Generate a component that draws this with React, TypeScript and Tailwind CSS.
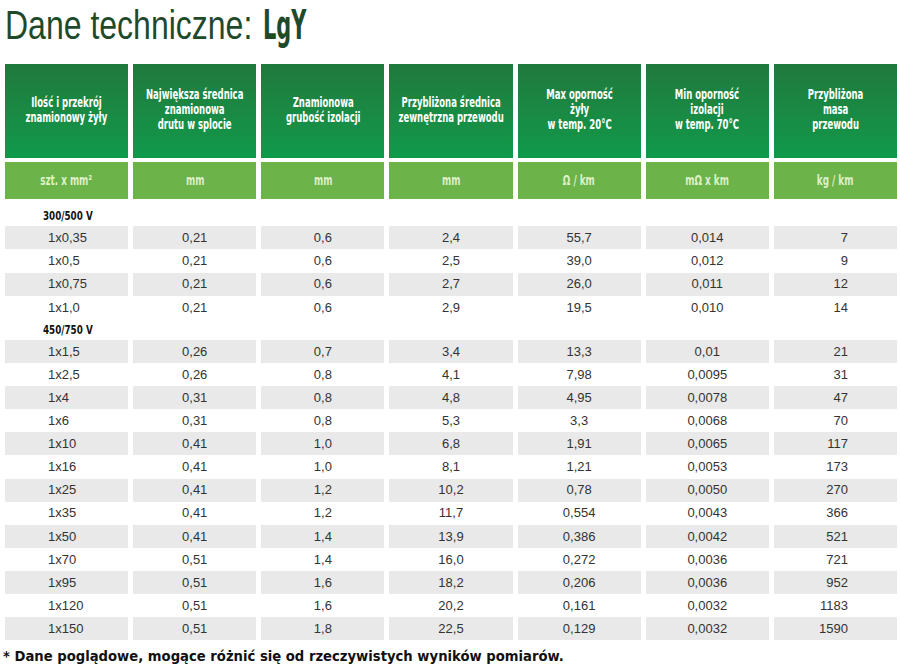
import React from "react";

const headers = [
  ["Ilość i przekrój", "znamionowy żyły"],
  ["Największa średnica", "znamionowa", "drutu w splocie"],
  ["Znamionowa", "grubość izolacji"],
  ["Przybliżona średnica", "zewnętrzna przewodu"],
  ["Max oporność", "żyły", "w temp. 20°C"],
  ["Min oporność", "izolacji", "w temp. 70°C"],
  ["Przybliżona", "masa", "przewodu"],
];

const units = ["szt. x mm²", "mm", "mm", "mm", "Ω / km", "mΩ x km", "kg / km"];

const sec1 = [
  ["1x0,35", "0,21", "0,6", "2,4", "55,7", "0,014", "7"],
  ["1x0,5", "0,21", "0,6", "2,5", "39,0", "0,012", "9"],
  ["1x0,75", "0,21", "0,6", "2,7", "26,0", "0,011", "12"],
  ["1x1,0", "0,21", "0,6", "2,9", "19,5", "0,010", "14"],
];

const sec2 = [
  ["1x1,5", "0,26", "0,7", "3,4", "13,3", "0,01", "21"],
  ["1x2,5", "0,26", "0,8", "4,1", "7,98", "0,0095", "31"],
  ["1x4", "0,31", "0,8", "4,8", "4,95", "0,0078", "47"],
  ["1x6", "0,31", "0,8", "5,3", "3,3", "0,0068", "70"],
  ["1x10", "0,41", "1,0", "6,8", "1,91", "0,0065", "117"],
  ["1x16", "0,41", "1,0", "8,1", "1,21", "0,0053", "173"],
  ["1x25", "0,41", "1,2", "10,2", "0,78", "0,0050", "270"],
  ["1x35", "0,41", "1,2", "11,7", "0,554", "0,0043", "366"],
  ["1x50", "0,41", "1,4", "13,9", "0,386", "0,0042", "521"],
  ["1x70", "0,51", "1,4", "16,0", "0,272", "0,0036", "721"],
  ["1x95", "0,51", "1,6", "18,2", "0,206", "0,0036", "952"],
  ["1x120", "0,51", "1,6", "20,2", "0,161", "0,0032", "1183"],
  ["1x150", "0,51", "1,8", "22,5", "0,129", "0,0032", "1590"],
];

const condensed = "font-['DejaVu_Sans_Condensed','DejaVu_Sans',sans-serif]";

function Row({ r, gray, h }: { r: string[]; gray: boolean; h: string }) {
  return (
    <div className={`grid grid-cols-7 gap-x-[5px] ${h}`}>
      {r.map((c, i) => (
        <div
          key={i}
          className={`flex items-center text-[13px] text-[#333] ${gray ? "bg-[#e9e9e9]" : ""} ${
            i === 0 ? "justify-start pl-[43px]" : i === 6 ? "justify-end pr-[49px]" : "justify-center"
          }`}
        >
          {c}
        </div>
      ))}
    </div>
  );
}

function Section({ label, h }: { label: string; h: string }) {
  return (
    <div className={`${h} flex items-center pl-[38px]`}>
      <span className={`inline-block origin-left scale-x-[0.75] whitespace-nowrap text-[13px] font-bold text-[#111] ${condensed}`}>
        {label}
      </span>
    </div>
  );
}

export default function App() {
  return (
    <div className="w-[900px] h-[668px] bg-white font-['Liberation_Sans',Arial,sans-serif] overflow-hidden">
      <div className="h-[64px] pl-[5px] pt-[1px] flex items-start">
        <div className="w-[258px]">
          <span className="inline-block origin-left scale-x-[0.8] whitespace-nowrap text-[40px] leading-[48px] text-[#1e4a2b]">
            Dane techniczne:
          </span>
        </div>
        <div className="w-[44px]">
          <span className={`inline-block origin-left scale-x-[0.58] whitespace-nowrap text-[40px] leading-[48px] font-bold text-[#1e4a2b] ${condensed}`}>
            LgY
          </span>
        </div>
      </div>
      <div className="pl-[5px] pr-[3px]">
        <div className="grid grid-cols-7 gap-x-[5px] h-[94px]">
          {headers.map((h, i) => (
            <div
              key={i}
              className="flex flex-col items-center justify-center bg-gradient-to-b from-[#1f793d] to-[#0e9a4a] pb-[3px]"
            >
              <div className={`scale-x-[0.7] whitespace-nowrap text-center text-white font-bold text-[13.5px] leading-[15px] ${condensed}`}>
                {h.map((l, j) => (
                  <div key={j}>{l}</div>
                ))}
              </div>
            </div>
          ))}
        </div>
        <div className="grid grid-cols-7 gap-x-[5px] h-[37px] mt-[4px]">
          {units.map((u, i) => (
            <div key={i} className="flex items-center justify-center bg-[#6cb34a]">
              <span className={`inline-block scale-x-[0.7] whitespace-nowrap text-[#dff0c6] font-bold text-[14px] ${condensed}`}>
                {u}
              </span>
            </div>
          ))}
        </div>
        <Section label="300/500 V" h="h-[27px] pt-[6px]" />
        {sec1.map((r, i) => (
          <Row key={i} r={r} gray={i % 2 === 0} h="h-[23.25px]" />
        ))}
        <Section label="450/750 V" h="h-[21px]" />
        {sec2.map((r, i) => (
          <Row key={i} r={r} gray={i % 2 === 0} h="h-[23.1px]" />
        ))}
      </div>
      <div className="mt-[7px] pl-[3px] text-[13.2px] font-bold text-[#111] font-['DejaVu_Sans',Verdana,sans-serif] whitespace-nowrap">
        * Dane poglądowe, mogące różnić się od rzeczywistych wyników pomiarów.
      </div>
    </div>
  );
}
